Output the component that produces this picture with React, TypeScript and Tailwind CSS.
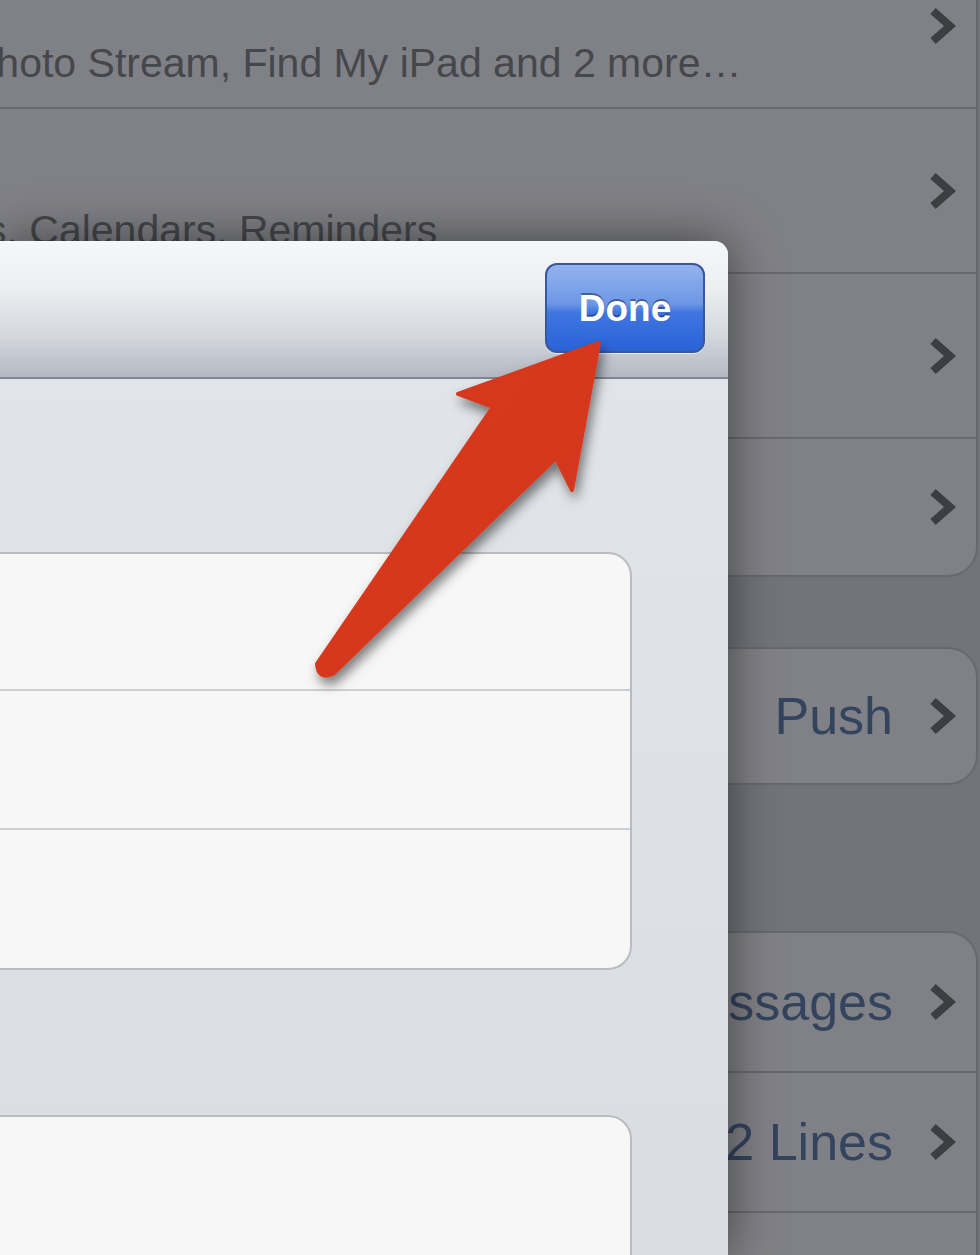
import React from "react";

function Chevron() {
  return (
    <svg width="30" height="40" viewBox="0 0 30 40" className="shrink-0">
      <path d="M6 5 L23 20 L6 35" fill="none" stroke="#3d3e42" strokeWidth="8" strokeLinejoin="miter" strokeLinecap="butt" />
    </svg>
  );
}

export default function App() {
  return (
    <div className="relative w-[980px] h-[1255px] overflow-hidden bg-[#71747b] font-['Liberation_Sans',Arial,sans-serif]">
      {/* Background settings list (dimmed) */}
      <div className="flex flex-col -mt-[56px]">
        <div className="-ml-[10px] mr-[2px] rounded-br-[30px] bg-[#808186] border-b-2 border-r-2 border-[#68696e] overflow-hidden">
          <div className="flex items-center h-[165px] border-b-2 border-[#68696e] pr-[19px]">
            <div className="flex-1 self-end pb-[23px] overflow-hidden whitespace-nowrap">
              <span className="block ml-[-21px] text-[41px] leading-[41px] text-[#46474b]">Photo Stream, Find My iPad and 2 more…</span>
            </div>
            <Chevron />
          </div>
          <div className="flex items-center h-[165px] border-b-2 border-[#68696e] pr-[19px]">
            <div className="flex-1 self-end pb-[21px] overflow-hidden whitespace-nowrap">
              <span className="block ml-[-4px] text-[41px] leading-[41px] text-[#46474b]">s, Calendars, Reminders</span>
            </div>
            <Chevron />
          </div>
          <div className="flex items-center justify-end h-[165px] border-b-2 border-[#68696e] pr-[19px]">
            <Chevron />
          </div>
          <div className="flex items-center justify-end h-[136px] pr-[19px]">
            <Chevron />
          </div>
        </div>

        <div className="mt-[70px] -ml-[10px] mr-[2px] h-[138px] rounded-r-[30px] bg-[#808186] border-2 border-[#68696e] flex items-center justify-end pr-[19px] gap-[34px]">
          <span className="text-[52px] leading-none text-[#34435e]">Push</span>
          <Chevron />
        </div>

        <div className="mt-[146px] -ml-[10px] mr-[2px] rounded-tr-[30px] bg-[#808186] border-t-2 border-r-2 border-[#68696e]">
          <div className="flex items-center justify-end h-[140px] border-b-2 border-[#68696e] pr-[19px] gap-[34px]">
            <span className="text-[52px] leading-none text-[#34435e] whitespace-nowrap">50 Recent Messages</span>
            <Chevron />
          </div>
          <div className="flex items-center justify-end h-[140px] border-b-2 border-[#68696e] pr-[19px] gap-[34px]">
            <span className="text-[52px] leading-none text-[#34435e]">2 Lines</span>
            <Chevron />
          </div>
          <div className="h-[140px]" />
        </div>
      </div>

      {/* Modal sheet */}
      <div className="absolute left-0 top-[241px] w-[728px] h-[1014px] rounded-tr-[14px] overflow-hidden flex flex-col shadow-[0_0_50px_rgba(0,0,0,0.5)] bg-[#dcdfe4]">
        <div className="h-[138px] shrink-0 flex justify-end items-start pt-[22px] pr-[23px] border-b-2 border-[#7f8692] bg-[linear-gradient(to_bottom,#f6f7f9_0%,#eceef1_35%,#d4d7dd_70%,#b3b8c2_100%)]">
          <div className="w-[160px] h-[90px] rounded-[12px] border-2 border-[#37589a] flex items-center justify-center bg-[linear-gradient(to_bottom,#93b3ec_0%,#6d97e6_45%,#3f76e0_55%,#2a62d8_100%)] shadow-[0_1px_0_rgba(255,255,255,0.6)]">
            <span className="text-[37px] font-bold text-white leading-none [text-shadow:0_-2px_0_rgba(20,40,90,0.55)]">Done</span>
          </div>
        </div>
        <div className="flex-1 flex flex-col pt-[173px] bg-[linear-gradient(to_bottom,#e1e4e8,#d9dce2)]">
          <div className="-ml-[40px] w-[672px] rounded-[24px] border-2 border-[#b9bcc1] bg-[#f7f7f7] flex flex-col">
            <div className="h-[137px] border-b-2 border-[#cdd0d3]" />
            <div className="h-[139px] border-b-2 border-[#cdd0d3]" />
            <div className="h-[138px]" />
          </div>
          <div className="mt-[145px] -ml-[40px] w-[672px] h-[200px] rounded-t-[24px] border-2 border-[#b9bcc1] bg-[#f7f7f7]" />
        </div>
      </div>

      {/* Red annotation arrow */}
      <svg className="absolute left-0 top-0 pointer-events-none" width="980" height="1255" viewBox="0 0 980 1255">
        <defs>
          <filter id="arrowShadow" x="-20%" y="-20%" width="140%" height="140%">
            <feDropShadow dx="3" dy="7" stdDeviation="6" floodColor="#000" floodOpacity="0.5" />
          </filter>
          <linearGradient id="arrowFill" x1="0" y1="0" x2="1" y2="1">
            <stop offset="0" stopColor="#dc3b1c" />
            <stop offset="1" stopColor="#d1341a" />
          </linearGradient>
        </defs>
        <path
          d="M599 343 L458 394 L493 407 L317 664 Q318 680 333 674 L556 458 L572 490 Z"
          fill="url(#arrowFill)"
          stroke="#d5371b"
          strokeWidth="4"
          strokeLinejoin="round"
          filter="url(#arrowShadow)"
        />
      </svg>
    </div>
  );
}
